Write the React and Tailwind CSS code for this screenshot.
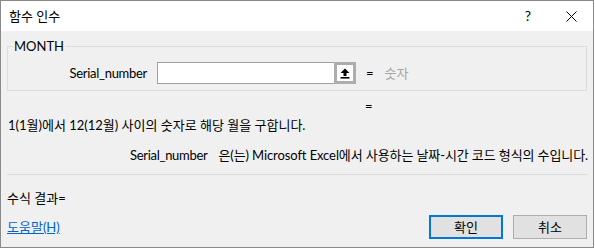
import React from 'react'

const FONT = { fontFamily: 'Lato, "Noto Sans CJK KR", "Noto Sans", sans-serif' }

function UpArrow() {
  return (
    <svg width="10" height="11" viewBox="0 0 10 11">
      <path d="M5 0.5 L9.5 5 H6.5 V8 H3.5 V5 H0.5 Z" fill="#000" />
      <rect x="0.5" y="9" width="9" height="1.6" fill="#000" />
    </svg>
  )
}

function CloseX() {
  return (
    <svg width="11" height="11" viewBox="0 0 11 11">
      <path d="M0.5 0.5 L10.5 10.5 M10.5 0.5 L0.5 10.5" stroke="#000" strokeWidth="1" />
    </svg>
  )
}

export default function App() {
  return (
    <div className="w-[595px] h-[250px] bg-white text-[13px] text-black" style={FONT}>
      <div className="w-[594px] h-[248px] border border-[#8a8a8a] flex flex-col">
        {/* title bar */}
        <div className="h-[30px] bg-white flex items-center pl-[8px] shrink-0">
          <span className="leading-[16px]">함수 인수</span>
          <span className="ml-auto mr-[35px] text-[14px] leading-[16px]">?</span>
          <span className="mr-[16px] flex items-center"><CloseX /></span>
        </div>

        {/* body */}
        <div className="flex-1 bg-[#f0f0f0] px-[6px] flex flex-col">
          <div className="mt-[15px] h-[45px] w-[580px] border border-[#dcdcdc] relative shrink-0">
            <span className="absolute -top-[9px] left-[5px] px-[1px] bg-[#f0f0f0] leading-[16px]">MONTH</span>
            <div className="mt-[15px] h-[22px] flex items-center">
              <span className="w-[139px] text-right leading-[16px] tracking-[-0.3px]">Serial_number</span>
              <div className="ml-[10px] w-[199px] h-[22px] flex">
                <div className="flex-1 bg-white border border-r-0 border-[#a0a0a0]" />
                <div className="w-[22px] h-[22px] bg-[#adadad] p-[3px]">
                  <div className="w-full h-full bg-white flex items-center justify-center"><UpArrow /></div>
                </div>
              </div>
              <span className="ml-[10px] leading-[16px]">=</span>
              <span className="ml-[11px] text-[#a6a6a6] leading-[16px]">숫자</span>
            </div>
          </div>

          <div className="mt-[7px] h-[16px] leading-[16px] pl-[358px]">=</div>
          <div className="mt-[3px] h-[16px] leading-[16px] pl-[1px]">1(1월)에서 12(12월) 사이의 숫자로 해당 월을 구합니다.</div>
          <div className="mt-[14px] h-[16px] leading-[16px] pl-[123px] whitespace-nowrap flex tracking-[-0.1px]">
            <span className="tracking-[-0.3px]">Serial_number</span>
            <span className="ml-[11px]">은(는) Microsoft Excel에서 사용하는 날짜-시간 코드 형식의 수입니다.</span>
          </div>

          <div className="mt-[11px] h-px w-[581px] bg-[#dcdcdc] shrink-0" />

          <div className="mt-[15px] h-[16px] leading-[16px]">수식 결과=</div>

          <div className="mt-[9px] h-[24px] flex items-center">
            <a className="text-[#0066cc] underline leading-[16px]">도움말(H)</a>
            <button className="ml-auto w-[74px] h-[24px] bg-[#e1e1e1] border-2 border-[#0078d7] leading-[16px]">확인</button>
            <button className="ml-[10px] w-[74px] h-[24px] bg-[#e1e1e1] border border-[#adadad] leading-[16px]">취소</button>
          </div>
        </div>
      </div>
    </div>
  )
}
